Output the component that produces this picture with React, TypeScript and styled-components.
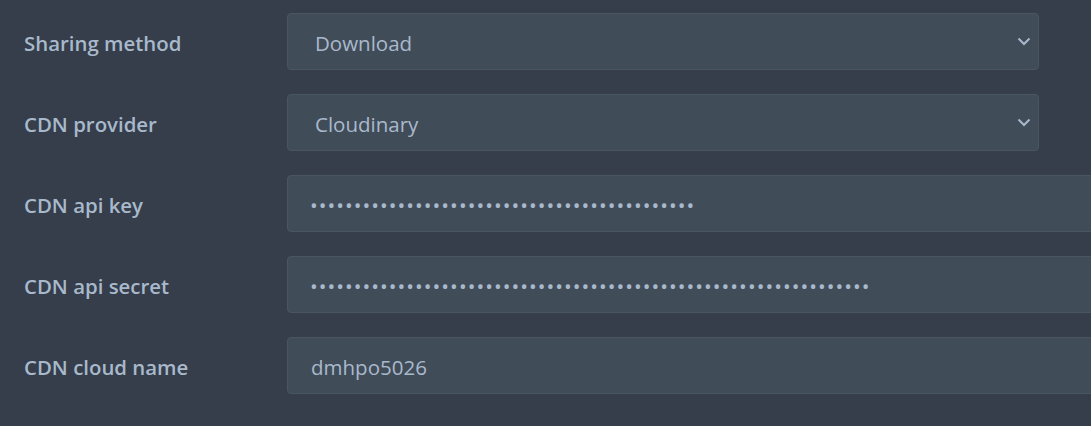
import React from 'react'
import styled, { createGlobalStyle } from 'styled-components'

const GlobalStyle = createGlobalStyle`
  html, body {
    margin: 0;
    padding: 0;
    background: #353e4a;
    overflow: hidden;
  }
  * {
    box-sizing: border-box;
  }
`

const Page = styled.div`
  width: 1091px;
  height: 426px;
  padding: 13px 0 0 24px;
  display: flex;
  flex-direction: column;
  gap: 24px;
  background: #353e4a;
  font-family: 'Open Sans', 'Noto Sans', sans-serif;
  overflow: hidden;
`

const Row = styled.div`
  display: grid;
  grid-template-columns: 263px 1fr;
  align-items: center;
  height: 57px;
`

const Label = styled.label`
  font-size: 20.4px;
  font-weight: 600;
  color: #a9b9cc;
  padding-top: 2px;
`

const fieldBase = `
  height: 57px;
  background: #414c59;
  border: 1px solid #4a5562;
  border-radius: 4px;
  color: #a9b9cc;
  font-family: 'Open Sans', 'Noto Sans', sans-serif;
  font-size: 20.5px;
  outline: none;
`

const SelectWrap = styled.div`
  position: relative;
  width: 752px;
`

const Select = styled.select`
  ${fieldBase}
  width: 100%;
  padding: 2px 40px 0 27px;
  appearance: none;
`

const Chevron = styled.svg`
  position: absolute;
  right: 8px;
  top: 24px;
  pointer-events: none;
`

const Input = styled.input<{ $spacing?: number }>`
  ${fieldBase}
  width: 900px;
  padding: 2px 22px 0;
  letter-spacing: ${({ $spacing }) => ($spacing ? `${$spacing}px` : 'normal')};
`

type Field =
  | { kind: 'select'; label: string; value: string }
  | { kind: 'password'; label: string; length: number }
  | { kind: 'text'; label: string; value: string }

const FIELDS: Field[] = [
  { kind: 'select', label: 'Sharing method', value: 'Download' },
  { kind: 'select', label: 'CDN provider', value: 'Cloudinary' },
  { kind: 'password', label: 'CDN api key', length: 44 },
  { kind: 'password', label: 'CDN api secret', length: 64 },
  { kind: 'text', label: 'CDN cloud name', value: 'dmhpo5026' },
]

const FieldControl = ({ field }: { field: Field }) => {
  if (field.kind === 'select') {
    return (
      <SelectWrap>
        <Select defaultValue={field.value}>
          <option>{field.value}</option>
        </Select>
        <Chevron width='14' height='9' viewBox='0 0 14 9'>
          <path d='M1.5 1.5 L7 7 L12.5 1.5' fill='none' stroke='#a9b9cc' strokeWidth='2' />
        </Chevron>
      </SelectWrap>
    )
  }
  if (field.kind === 'password') {
    return <Input type='password' readOnly $spacing={1.05} defaultValue={'x'.repeat(field.length)} />
  }
  return <Input type='text' readOnly defaultValue={field.value} style={{ paddingLeft: 23 }} />
}

export default function App() {
  return (
    <>
      <GlobalStyle />
      <Page>
        {FIELDS.map((field) => (
          <Row key={field.label}>
            <Label>{field.label}</Label>
            <FieldControl field={field} />
          </Row>
        ))}
      </Page>
    </>
  )
}
